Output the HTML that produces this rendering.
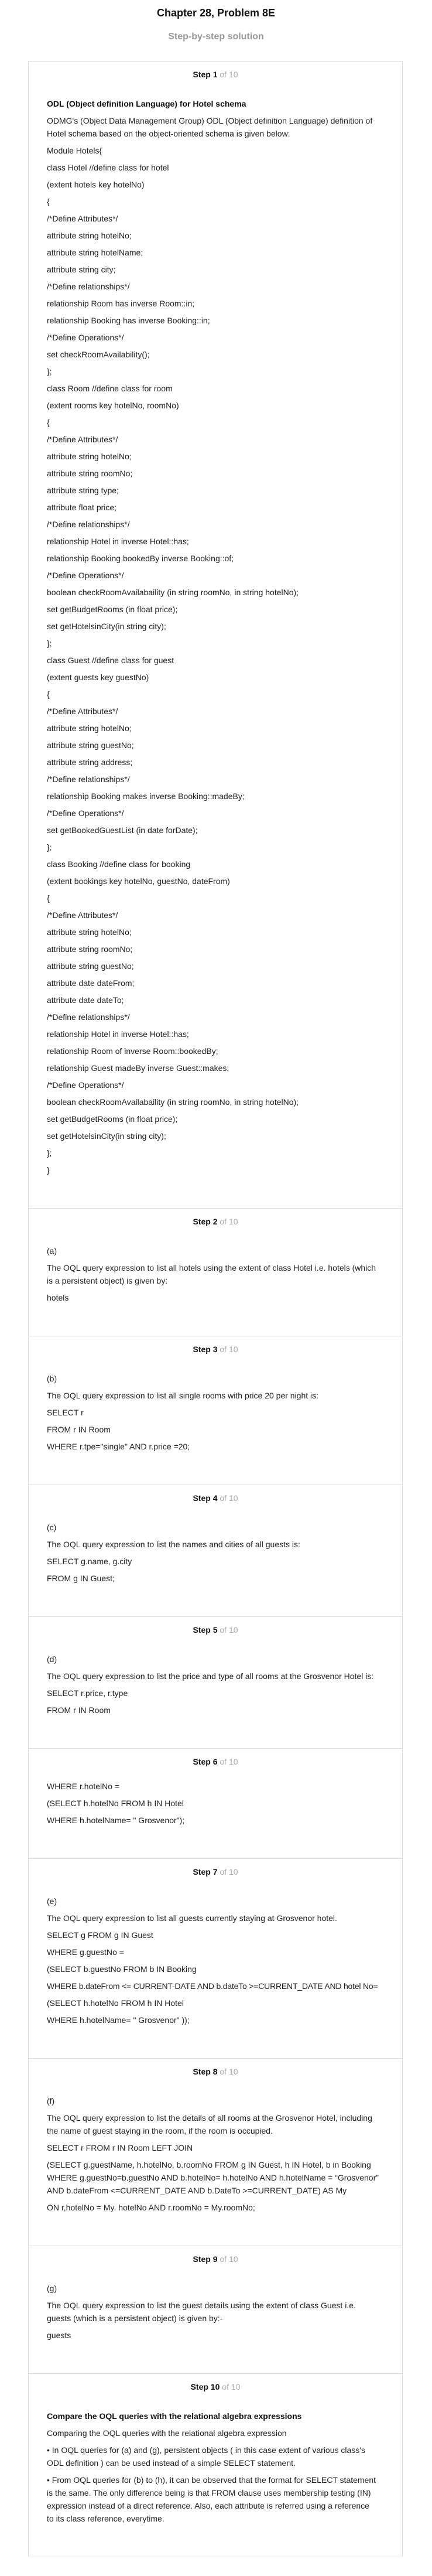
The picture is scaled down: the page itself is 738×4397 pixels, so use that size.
<!DOCTYPE html>
<html>
<head>
<meta charset="utf-8">
<style>
html,body{margin:0;padding:0;background:#fff;}
body{width:738px;height:4397px;font-family:"Liberation Sans",Arial,sans-serif;color:#222;position:relative;overflow:hidden;}
h1{position:absolute;left:0;width:738px;top:10px;margin:0;text-align:center;font-size:18px;line-height:24px;font-weight:bold;color:#111;}
h2{position:absolute;left:0;width:738px;top:52px;margin:0;text-align:center;font-size:16px;line-height:22px;font-weight:bold;color:#9a9a9a;}
.card{position:absolute;left:48px;top:104px;width:638px;border:1px solid #ddd;}
.step{border-top:1px solid #ddd;}
.step:first-child{border-top:none;}
.label{height:44px;line-height:44px;text-align:center;font-size:14px;font-weight:bold;color:#111;}
.label span{font-weight:normal;color:#aaa;}
.content{padding:17px 20px 54px 31px;font-size:14px;}
.content.t6{padding-top:9px;}
.content p{margin:0 0 7px 0;line-height:22px;white-space:nowrap;}
.content p:last-child{margin-bottom:0;}
.content p.b{font-weight:bold;color:#111;}
</style>
</head>
<body>
<h1>Chapter 28, Problem 8E</h1>
<h2>Step-by-step solution</h2>
<div class="card">
<div class="step">
<div class="label">Step 1 <span>of 10</span></div>
<div class="content">
<p class="b">ODL (Object definition Language) for Hotel schema</p>
<p>ODMG's (Object Data Management Group) ODL (Object definition Language) definition of<br>Hotel schema based on the object-oriented schema is given below:</p>
<p>Module Hotels{</p>
<p>class Hotel //define class for hotel</p>
<p>(extent hotels key hotelNo)</p>
<p>{</p>
<p>/*Define Attributes*/</p>
<p>attribute string hotelNo;</p>
<p>attribute string hotelName;</p>
<p>attribute string city;</p>
<p>/*Define relationships*/</p>
<p>relationship Room has inverse Room::in;</p>
<p>relationship Booking has inverse Booking::in;</p>
<p>/*Define Operations*/</p>
<p>set checkRoomAvailability();</p>
<p>};</p>
<p>class Room //define class for room</p>
<p>(extent rooms key hotelNo, roomNo)</p>
<p>{</p>
<p>/*Define Attributes*/</p>
<p>attribute string hotelNo;</p>
<p>attribute string roomNo;</p>
<p>attribute string type;</p>
<p>attribute float price;</p>
<p>/*Define relationships*/</p>
<p>relationship Hotel in inverse Hotel::has;</p>
<p>relationship Booking bookedBy inverse Booking::of;</p>
<p>/*Define Operations*/</p>
<p>boolean checkRoomAvailabaility (in string roomNo, in string hotelNo);</p>
<p>set getBudgetRooms (in float price);</p>
<p>set getHotelsinCity(in string city);</p>
<p>};</p>
<p>class Guest //define class for guest</p>
<p>(extent guests key guestNo)</p>
<p>{</p>
<p>/*Define Attributes*/</p>
<p>attribute string hotelNo;</p>
<p>attribute string guestNo;</p>
<p>attribute string address;</p>
<p>/*Define relationships*/</p>
<p>relationship Booking makes inverse Booking::madeBy;</p>
<p>/*Define Operations*/</p>
<p>set getBookedGuestList (in date forDate);</p>
<p>};</p>
<p>class Booking //define class for booking</p>
<p>(extent bookings key hotelNo, guestNo, dateFrom)</p>
<p>{</p>
<p>/*Define Attributes*/</p>
<p>attribute string hotelNo;</p>
<p>attribute string roomNo;</p>
<p>attribute string guestNo;</p>
<p>attribute date dateFrom;</p>
<p>attribute date dateTo;</p>
<p>/*Define relationships*/</p>
<p>relationship Hotel in inverse Hotel::has;</p>
<p>relationship Room of inverse Room::bookedBy;</p>
<p>relationship Guest madeBy inverse Guest::makes;</p>
<p>/*Define Operations*/</p>
<p>boolean checkRoomAvailabaility (in string roomNo, in string hotelNo);</p>
<p>set getBudgetRooms (in float price);</p>
<p>set getHotelsinCity(in string city);</p>
<p>};</p>
<p>}</p>
</div>
</div>
<div class="step">
<div class="label">Step 2 <span>of 10</span></div>
<div class="content">
<p>(a)</p>
<p>The OQL query expression to list all hotels using the extent of class Hotel i.e. hotels (which<br>is a persistent object) is given by:</p>
<p>hotels</p>
</div>
</div>
<div class="step">
<div class="label">Step 3 <span>of 10</span></div>
<div class="content">
<p>(b)</p>
<p>The OQL query expression to list all single rooms with price 20 per night is:</p>
<p>SELECT r</p>
<p>FROM r IN Room</p>
<p>WHERE r.tpe="single" AND r.price =20;</p>
</div>
</div>
<div class="step">
<div class="label">Step 4 <span>of 10</span></div>
<div class="content">
<p>(c)</p>
<p>The OQL query expression to list the names and cities of all guests is:</p>
<p>SELECT g.name, g.city</p>
<p>FROM g IN Guest;</p>
</div>
</div>
<div class="step">
<div class="label">Step 5 <span>of 10</span></div>
<div class="content">
<p>(d)</p>
<p>The OQL query expression to list the price and type of all rooms at the Grosvenor Hotel is:</p>
<p>SELECT r.price, r.type</p>
<p>FROM r IN Room</p>
</div>
</div>
<div class="step">
<div class="label">Step 6 <span>of 10</span></div>
<div class="content t6">
<p>WHERE r.hotelNo =</p>
<p>(SELECT h.hotelNo FROM h IN Hotel</p>
<p>WHERE h.hotelName= " Grosvenor");</p>
</div>
</div>
<div class="step">
<div class="label">Step 7 <span>of 10</span></div>
<div class="content">
<p>(e)</p>
<p>The OQL query expression to list all guests currently staying at Grosvenor hotel.</p>
<p>SELECT g FROM g IN Guest</p>
<p>WHERE g.guestNo =</p>
<p>(SELECT b.guestNo FROM b IN Booking</p>
<p style="letter-spacing:-0.2px">WHERE b.dateFrom &lt;= CURRENT-DATE AND b.dateTo &gt;=CURRENT_DATE AND hotel No=</p>
<p>(SELECT h.hotelNo FROM h IN Hotel</p>
<p>WHERE h.hotelName= " Grosvenor" ));</p>
</div>
</div>
<div class="step">
<div class="label">Step 8 <span>of 10</span></div>
<div class="content">
<p>(f)</p>
<p>The OQL query expression to list the details of all rooms at the Grosvenor Hotel, including<br>the name of guest staying in the room, if the room is occupied.</p>
<p>SELECT r FROM r IN Room LEFT JOIN</p>
<p>(SELECT g.guestName, h.hotelNo, b.roomNo FROM g IN Guest, h IN Hotel, b in Booking<br>WHERE g.guestNo=b.guestNo AND b.hotelNo= h.hotelNo AND h.hotelName = “Grosvenor”<br>AND b.dateFrom &lt;=CURRENT_DATE AND b.DateTo &gt;=CURRENT_DATE) AS My</p>
<p>ON r,hotelNo = My. hotelNo AND r.roomNo = My.roomNo;</p>
</div>
</div>
<div class="step">
<div class="label">Step 9 <span>of 10</span></div>
<div class="content">
<p>(g)</p>
<p>The OQL query expression to list the guest details using the extent of class Guest i.e.<br>guests (which is a persistent object) is given by:-</p>
<p>guests</p>
</div>
</div>
<div class="step">
<div class="label">Step 10 <span>of 10</span></div>
<div class="content">
<p class="b">Compare the OQL queries with the relational algebra expressions</p>
<p>Comparing the OQL queries with the relational algebra expression</p>
<p>• In OQL queries for (a) and (g), persistent objects ( in this case extent of various class's<br>ODL definition ) can be used instead of a simple SELECT statement.</p>
<p>• From OQL queries for (b) to (h), it can be observed that the format for SELECT statement<br>is the same. The only difference being is that FROM clause uses membership testing (IN)<br>expression instead of a direct reference. Also, each attribute is referred using a reference<br>to its class reference, everytime.</p>
</div>
</div>
</div>
</body>
</html>
